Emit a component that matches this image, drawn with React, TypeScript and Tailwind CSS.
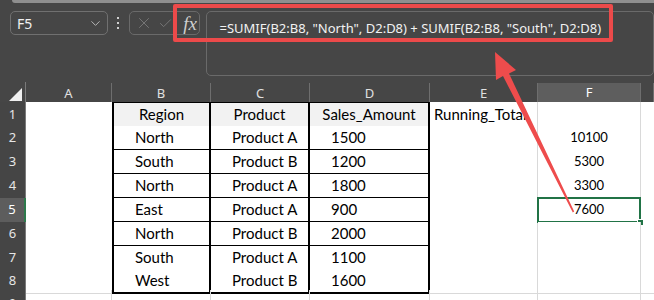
import { ChevronDown, X, Check } from 'lucide-react'

const colClass = 'grid grid-cols-[26px_86px_99px_99px_120px_108px_103px_1fr]'
const letters = ['A', 'B', 'C', 'D', 'E', 'F', '']

const rows = [
  ['Region', 'Product', 'Sales_Amount', 'Running_Total', ''],
  ['North', 'Product A', '1500', '', '10100'],
  ['South', 'Product B', '1200', '', '5300'],
  ['North', 'Product A', '1800', '', '3300'],
  ['East', 'Product A', '900', '', '7600'],
  ['North', 'Product B', '2000', '', ''],
  ['South', 'Product A', '1100', '', ''],
  ['West', 'Product B', '1600', '', ''],
]
const rowH = ['h-[24px]', 'h-[24px]', 'h-[24px]', 'h-[24px]', 'h-[24px]', 'h-[24px]', 'h-[23px]', 'h-[21px]']

function Toolbar() {
  return (
    <div className="h-[80px] bg-[#464646] relative">
      <div className="absolute top-0 left-[12px] right-0 h-[3px] bg-[#8f8f8f] rounded-bl-[3px]" />
      <div className="flex items-start pt-[11px] pl-[10px]">
        {/* name box */}
        <div className="w-[100px] h-[24px] rounded-[5px] border border-[#707070] flex items-center justify-between pl-[6px] pr-[4px]">
          <span className="text-[14px] text-[#f0f0f0]" style={{ fontFamily: '"Noto Sans", sans-serif' }}>F5</span>
          <ChevronDown size={15} strokeWidth={1.5} color="#bdbdbd" />
        </div>
        <div className="w-[22px] h-[24px] flex flex-col items-center justify-center gap-[3px]">
          <span className="w-[2px] h-[2px] bg-[#d0d0d0]" />
          <span className="w-[2px] h-[2px] bg-[#d0d0d0]" />
          <span className="w-[2px] h-[2px] bg-[#d0d0d0]" />
        </div>
        {/* cancel / enter / fx */}
        <div className="w-[72px] h-[24px] rounded-[5px] border border-[#6a6a6a] flex items-center pl-[5px]">
          <X size={18} strokeWidth={1.2} color="#7a7a7a" />
          <Check size={15} strokeWidth={1.4} color="#7a7a7a" className="ml-[5px]" />
          <span className="ml-[10px] text-[19px] italic text-[#cfcfcf] leading-none" style={{ fontFamily: '"Liberation Serif", serif' }}>fx</span>
        </div>
        {/* formula box */}
        <div className="ml-[6px] w-[460px] h-[65px] rounded-[5px] border border-[#6a6a6a] pl-[13px] pt-[3px]">
          <span className="text-[13px] text-[#f2f2f2] whitespace-nowrap" style={{ fontFamily: '"Noto Sans", sans-serif' }}>
            =SUMIF(B2:B8, "North", D2:D8) + SUMIF(B2:B8, "South", D2:D8)
          </span>
        </div>
      </div>
    </div>
  )
}

function HeaderRow() {
  return (
    <div className={`${colClass} h-[22px] bg-[#464646]`} style={{ fontFamily: '"Noto Sans", sans-serif' }}>
      <div className="border-r border-[#7a7a7a] border-b border-b-[#9a9a9a] mt-[2px] flex items-end justify-end pr-[3px] pb-[3px]">
        <svg width="13" height="13"><polygon points="13,0 13,13 0,13" fill="#f0f0f0" /></svg>
      </div>
      {letters.map((l, k) => (
        <div key={k}
          className={`mt-[3px] flex items-center justify-center text-[13px] border-r border-[#6e6e6e] ${l === 'F' ? 'bg-[#5e5e5e] text-white border-b-2 border-b-[#2c7a4b]' : 'text-[#e0e0e0]'}`}>
          {l}
        </div>
      ))}
    </div>
  )
}

function Row({ r, i }: { r: string[], i: number }) {
  const head = i === 0
  const tbl = `border-r-2 border-b-2 border-black ${head ? 'border-t bg-[#f2f2f2] justify-center' : 'bg-white pl-[21px]'}`
  return (
    <div className={`${colClass} ${rowH[i]}`}>
      <div className={`flex items-center justify-center text-[13px] border-b border-[#6a6a6a] ${i === 4 ? 'bg-[#5d5d5d] text-white border-r-2 border-r-[#2c7a4b]' : 'bg-[#454545] text-[#e6e6e6] border-r border-r-[#7a7a7a]'}`}
        style={{ fontFamily: '"Noto Sans", sans-serif' }}>
        {i + 1}
      </div>
      <div className="bg-white border-b border-[#d9d9d9]" />
      <div className={`flex items-center text-[15px] text-black border-l-2 ${tbl}`}>{r[0]}</div>
      <div className={`flex items-center text-[15px] text-black ${tbl}`}>{r[1]}</div>
      <div className={`flex items-center text-[15px] text-black ${tbl}`}>{r[2]}</div>
      <div className="flex items-center text-[15px] text-black bg-white pl-[4px] border-r border-b border-[#d9d9d9] whitespace-nowrap">{r[3]}</div>
      <div className="relative flex items-center justify-center text-[13px] text-black bg-white border-r border-b border-[#d9d9d9]">
        {r[4]}
        {i === 4 && (
          <>
            <div className="absolute -left-px -top-px -right-px -bottom-px border-2 border-[#217346]" />
            <div className="absolute -right-[4px] -bottom-[4px] w-[7px] h-[7px] bg-[#217346] border border-white" />
          </>
        )}
      </div>
      <div className="bg-white border-b border-[#d9d9d9]" />
    </div>
  )
}

export default function App() {
  return (
    <div className="w-[654px] h-[300px] overflow-hidden relative bg-white" style={{ fontFamily: 'Lato, sans-serif' }}>
      <Toolbar />
      <HeaderRow />
      {rows.map((r, i) => <Row key={i} r={r} i={i} />)}
      <div className={`${colClass} h-[24px]`}>
        <div className="bg-[#454545] text-[#e6e6e6] text-[13px] flex justify-center pt-[4px] border-r border-[#7a7a7a]" style={{ fontFamily: '"Noto Sans", sans-serif' }}>9</div>
        <div className="border-r border-[#d9d9d9]" />
        <div className="border-r border-[#d9d9d9]" />
        <div className="border-r border-[#d9d9d9]" />
        <div className="border-r border-[#d9d9d9]" />
        <div className="border-r border-[#d9d9d9]" />
        <div className="border-r border-[#d9d9d9]" />
        <div />
      </div>

      {/* red highlight box */}
      <div className="absolute left-[173px] top-[4px] w-[440px] h-[38px] border-[4px] border-[#ec4a4a] rounded-[2px]" />

      {/* arrow */}
      <svg className="absolute inset-0 pointer-events-none" width="654" height="300">
        <polygon
          points="495,52 516,70 509,73.5 574.2,211.6 572.8,212.4 503,76 496,80"
          fill="#ee4c4c"
        />
      </svg>
    </div>
  )
}
